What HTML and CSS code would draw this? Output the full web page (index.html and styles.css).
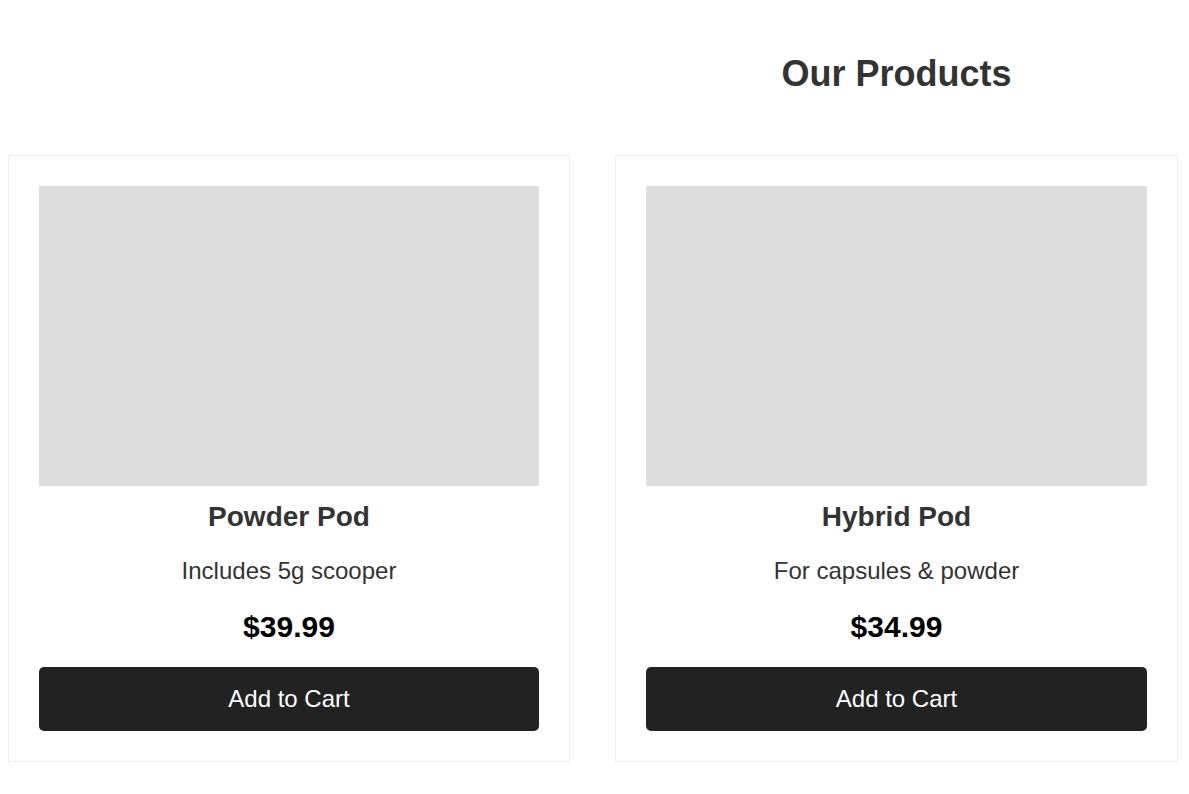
FILE: index.html
```html
<!DOCTYPE html>
<html lang="en">
<head>
<meta charset="utf-8">
<title>Our Products</title>
<link rel="stylesheet" href="styles.css">
</head>
<body>
<main class="page">
  <div class="spacer"></div>
  <h1 class="page-title">Our Products</h1>
  <article class="card">
    <div class="card-image"></div>
    <h2 class="card-name">Powder Pod</h2>
    <p class="card-desc">Includes 5g scooper</p>
    <p class="card-price">$39.99</p>
    <button class="card-btn" type="button">Add to Cart</button>
  </article>
  <article class="card">
    <div class="card-image"></div>
    <h2 class="card-name">Hybrid Pod</h2>
    <p class="card-desc">For capsules &amp; powder</p>
    <p class="card-price">$34.99</p>
    <button class="card-btn" type="button">Add to Cart</button>
  </article>
</main>
</body>
</html>
```
FILE: styles.css
```css
* { box-sizing: border-box; }
html, body { margin: 0; padding: 0; background: #fff; }
body {
  font-family: "Liberation Sans", Arial, sans-serif;
  color: #333;
}
.page {
  display: grid;
  grid-template-columns: 562px 563px;
  column-gap: 45px;
  width: 1189px;
  padding: 53px 11px 40px 8px;
}
.page-title {
  margin: 0 0 60px;
  font-size: 36px;
  font-weight: bold;
  line-height: normal;
  text-align: center;
  color: #333;
}
.card {
  border: 1px solid #eee;
  padding: 30px;
  display: flex;
  flex-direction: column;
  align-items: stretch;
  text-align: center;
}
.card-image {
  height: 300px;
  background: #ddd;
}
.card-name {
  margin: 15px 0 0;
  font-size: 28px;
  font-weight: bold;
  line-height: normal;
  color: #333;
}
.card-desc {
  margin: 24px 0 0;
  font-size: 24px;
  line-height: normal;
  color: #333;
}
.card-price {
  margin: 25px 0 0;
  font-size: 30px;
  font-weight: bold;
  line-height: normal;
  color: #000;
}
.card-btn {
  margin-top: 23px;
  height: 64px;
  border: none;
  border-radius: 5px;
  background: #222;
  color: #fff;
  font-family: "Liberation Sans", Arial, sans-serif;
  font-size: 24px;
  cursor: pointer;
}
```
